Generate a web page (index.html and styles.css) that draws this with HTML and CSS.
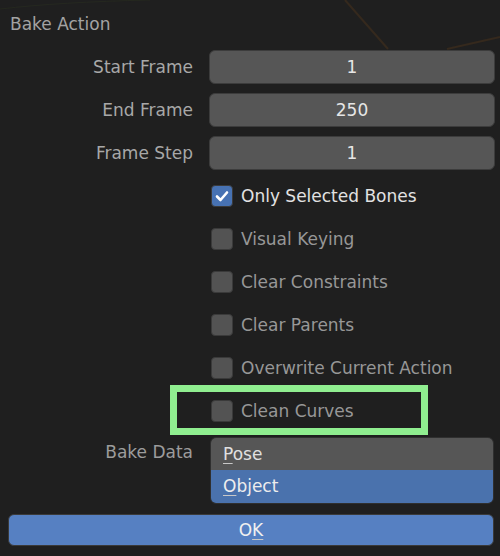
FILE: index.html
```html
<!DOCTYPE html>
<html>
<head>
<meta charset="utf-8">
<link rel="stylesheet" href="styles.css">
</head>
<body>
<div class="popup">
  <svg class="bg-lines" width="500" height="60" viewBox="0 0 500 60">
    <path d="M345 0 L388 49" stroke="#35291d" stroke-width="2" fill="none"/>
    <path d="M447 49 L500 37" stroke="#35291d" stroke-width="2" fill="none"/>
    <path d="M0 9 Q60 2 150 0" stroke="#25281f" stroke-width="1" fill="none"/>
  </svg>
  <div class="title">Bake Action</div>
  <div class="form">
    <div class="lbl">Start Frame</div>
    <div class="field">1</div>
    <div class="lbl">End Frame</div>
    <div class="field">250</div>
    <div class="lbl">Frame Step</div>
    <div class="field">1</div>

    <div></div>
    <div class="check on"><span class="box"><svg width="16" height="16" viewBox="0 0 16 16"><path d="M3 8.5 L6.5 12 L13 4.5" stroke="#fff" stroke-width="2.6" fill="none" stroke-linecap="round" stroke-linejoin="round"/></svg></span>Only Selected Bones</div>
    <div></div>
    <div class="check"><span class="box"></span>Visual Keying</div>
    <div></div>
    <div class="check"><span class="box"></span>Clear Constraints</div>
    <div></div>
    <div class="check"><span class="box"></span>Clear Parents</div>
    <div></div>
    <div class="check"><span class="box"></span>Overwrite Current Action</div>
    <div></div>
    <div class="check"><span class="box"></span>Clean Curves</div>

    <div class="lbl lbl-top">Bake Data</div>
    <div class="menu">
      <div class="item"><u>P</u>ose</div>
      <div class="item sel"><u>O</u>bject</div>
    </div>
  </div>
  <div class="ok">O<u>K</u></div>
  <div class="highlight"></div>
</div>
</body>
</html>
```

FILE: styles.css
```css
html, body {
  margin: 0;
  padding: 0;
  background: #1f1f1f;
}
body {
  width: 500px;
  height: 556px;
  overflow: hidden;
  font-family: "DejaVu Sans", "Liberation Sans", sans-serif;
  font-size: 17px;
}
.popup {
  position: relative;
  width: 500px;
  height: 556px;
  padding-top: 12px;
  box-sizing: border-box;
}
.bg-lines {
  position: absolute;
  left: 0;
  top: 0;
}
.title {
  position: relative;
  padding-left: 10px;
  height: 24px;
  line-height: 24px;
  color: #a3a3a3;
  margin-bottom: 14px;
}
.form {
  position: relative;
  display: grid;
  grid-template-columns: 193px 286px;
  column-gap: 16px;
  row-gap: 9px;
  grid-auto-rows: 34px;
}
.lbl {
  text-align: right;
  line-height: 34px;
  color: #a8a8a8;
}
.lbl-top {
  line-height: 31px;
  color: #9c9c9c;
}
.field {
  background: #565656;
  border: 1px solid #3c3c3c;
  border-radius: 6px;
  color: #e6e6e6;
  text-align: center;
  line-height: 32px;
}
.check {
  display: flex;
  align-items: center;
  gap: 8px;
  color: #979797;
  padding-left: 2px;
}
.check.on {
  color: #e2e2e2;
}
.box {
  flex: none;
  width: 20px;
  height: 20px;
  border: 1px solid #3a3a3a;
  border-radius: 4px;
  background: #535353;
  display: flex;
  align-items: center;
  justify-content: center;
}
.check.on .box {
  background: #4772b3;
  border-color: #3a3a3a;
}
.menu {
  grid-row: span 2;
  height: 67px;
  margin: 0 1px;
  border: 1px solid #2f2f2f;
  border-radius: 6px;
  overflow: hidden;
  display: flex;
  flex-direction: column;
  box-sizing: border-box;
}
.item {
  height: 32px;
  line-height: 32px;
  padding-left: 12px;
  background: #565656;
  color: #e0e0e0;
}
.item.sel {
  height: 33px;
  background: #4a72ad;
  color: #ededed;
}
u {
  text-decoration-color: #c8c8c8;
  text-underline-offset: 3px;
}
.ok {
  margin: 0 0 0 8px;
  width: 486px;
  height: 32px;
  box-sizing: border-box;
  background: #5680c2;
  border: 1px solid #3a3a3a;
  border-radius: 6px;
  color: #f0f0f0;
  text-align: center;
  line-height: 30px;
}
.highlight {
  position: absolute;
  left: 170px;
  top: 385px;
  width: 258px;
  height: 50px;
  box-sizing: border-box;
  border: 7px solid #90ee90;
}
```
